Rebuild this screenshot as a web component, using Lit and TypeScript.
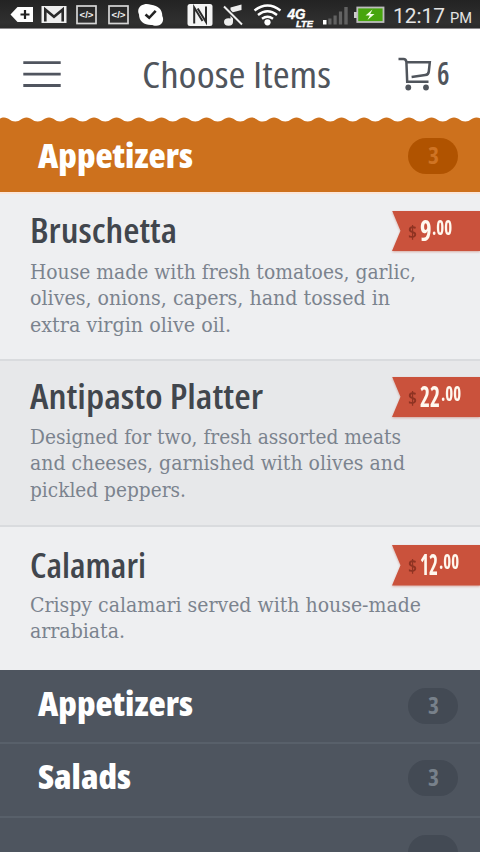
import { LitElement, html, svg, css } from 'lit';
import { customElement, property } from 'lit/decorators.js';

interface TextLine {
  text: string;
  width: number;
}

interface Dish {
  name: TextLine;
  lines: TextLine[];
  dollars: TextLine;
  kind: string;
}

const DISHES: Dish[] = [
  {
    name: { text: 'Bruschetta', width: 147 },
    lines: [
      { text: 'House made with fresh tomatoes, garlic,', width: 386 },
      { text: 'olives, onions, capers, hand tossed in', width: 360 },
      { text: 'extra virgin olive oil.', width: 201 },
    ],
    dollars: { text: '9', width: 11.5 },
    kind: 'first',
  },
  {
    name: { text: 'Antipasto Platter', width: 233 },
    lines: [
      { text: 'Designed for two, fresh assorted meats', width: 371 },
      { text: 'and cheeses, garnished with olives and', width: 375 },
      { text: 'pickled peppers.', width: 156 },
    ],
    dollars: { text: '22', width: 20 },
    kind: 'second',
  },
  {
    name: { text: 'Calamari', width: 116 },
    lines: [
      { text: 'Crispy calamari served with house-made', width: 391 },
      { text: 'arrabiata.', width: 95 },
    ],
    dollars: { text: '12', width: 18 },
    kind: 'third',
  },
];

// One line of text condensed to a given width
@customElement('fit-text')
export class FitText extends LitElement {
  static styles = css`
    :host {
      display: block;
      flex: none;
    }

    svg {
      display: block;
      overflow: visible;
    }

    text {
      fill: currentColor;
    }
  `;

  @property() text = '';
  @property({ type: Number }) width = 100;
  @property({ type: Number }) height = 30;
  @property({ type: Number }) base = 24;

  render() {
    return html`
      <svg width=${this.width} height=${this.height}>
        <text x="0" y=${this.base} textLength=${this.width} lengthAdjust="spacingAndGlyphs">${this.text}</text>
      </svg>
    `;
  }
}

@customElement('status-bar')
export class StatusBar extends LitElement {
  static styles = css`
    :host {
      display: flex;
      flex: none;
      height: 29px;
      background: linear-gradient(#232323, #303030 80%, #2b2b2b);
      border-bottom: 1px solid #8b898c;
      box-sizing: border-box;
      color: #e4e4e4;
      font-family: Roboto, sans-serif;
    }

    .icons {
      display: block;
      flex: none;
      width: 393px;
      height: 28px;
    }

    .small {
      font: bold 9px 'Liberation Sans', sans-serif;
      fill: #eee;
    }

    .net {
      font: italic bold 14px 'Liberation Sans', sans-serif;
      fill: #fff;
      stroke: #fff;
      stroke-width: 0.4px;
    }

    .lte {
      font-size: 9px;
    }

    .clock {
      font-size: 20px;
    }

    .ampm {
      font-size: 14.5px;
      margin-left: 5px;
    }
  `;

  render() {
    return html`
      <svg class="icons" viewBox="0 0 393 28" fill="none">
        <path d="M10.5 14.5 17.5 7H33v15H17.5z" fill="#fff" />
        <path d="M20.5 14.5h9M25 10v9" stroke="#222" stroke-width="2.2" />
        <path d="M41.5 6h25v17h-25z" fill="#eee" />
        <path d="M45.3 21.5V9.5l8.7 7.2 8.7-7.2v12" stroke="#2a2a2a" stroke-width="2.6" />
        ${[76, 108].map(
          (x) => svg`
            <rect x=${x + 1} y="6" width="19" height="17.5" stroke="#d6d6d6" stroke-width="1.7" />
            <text class="small" x=${x + 3.5} y="18" textLength="14" lengthAdjust="spacingAndGlyphs">&lt;/&gt;</text>
          `
        )}
        <path d="M144 4.5c3-1 5 0 7 .2 7 .6 11.5 5 11.3 11.3 2.5 5-1 10-6.3 9.8-2 0-3-.8-5-.8-7 0-12-4-12-10.5-2-4.5 0-9 5-10z" fill="#fff" />
        <path d="m145.5 14.5 3.7 3.3 6.5-7" stroke="#222" stroke-width="2.6" />
        <path d="M190 4h20q2.500 0 2.500 2.500v17q0 2.500-2.500 2.500h-20q-2.500 0-2.500-2.500v-17Q187.500 4 190 4z" fill="#f4f4f4" />
        <path d="M194.2 23.5V7.500l8.300 13.500M206 6.500v15.500l-8.300-13.500" stroke="#2a2a2a" stroke-width="2" />
        <ellipse cx="228.500" cy="22" rx="4.500" ry="3.700" fill="#eee" />
        <path d="M230.500 22V7.500l11-3v5.500l-8.500 2.300V22z" fill="#eee" />
        <path d="m224 6.500 18 18" stroke="#2a2a2a" stroke-width="4.200" />
        <path d="m224 6.500 18 18" stroke="#eee" stroke-width="1.900" />
        <circle cx="267.5" cy="22.3" r="3.1" fill="#fff" />
        <path d="M254.5 10.5q13-10 26 0M258 15q9.5-7.5 19 0M262 18.8q5.5-4 11 0" stroke="#fff" stroke-width="2.4" />
        <text class="net" x="287.5" y="18.5" textLength="18" lengthAdjust="spacingAndGlyphs">4G</text>
        <text class="net lte" x="296" y="26.5" textLength="17" lengthAdjust="spacingAndGlyphs">LTE</text>
        <path d="M323 20h3.5v4.5H323z" fill="#fff" />
        <path d="M328.3 18.5h3.2v6h-3.2zM333.5 15.5h3.2v9h-3.2zM338.9 11.5h3.2v13h-3.2zM344.3 7h3.4v17.5h-3.4z" fill="#626262" />
        <path d="M354 12h3v6h-3z" fill="#ccc" />
        <rect x="357.3" y="7.5" width="26.2" height="14.5" fill="#47a50e" stroke="#bdbdbd" stroke-width="1.8" />
        <path d="m372.5 9.5-7 6h4.300l-2.300 4.500 7-6h-4.300z" fill="#f4ffe8" />
      </svg>
      <fit-text class="clock" text="12:17" width="52" height="27" base="23"></fit-text>
      <fit-text class="ampm" text="PM" width="22" height="27" base="23"></fit-text>
    `;
  }
}

@customElement('category-bar')
export class CategoryBar extends LitElement {
  static styles = css`
    :host {
      display: flex;
      flex: none;
      justify-content: space-between;
      align-items: flex-start;
      box-sizing: border-box;
      padding: 0 22px 0 38px;
      color: #fff;
      background: #4e555f;
      --badge: #434a54;
      --count: #78818b;
    }

    .label {
      font: 800 condensed 33.5px 'Open Sans', sans-serif;
    }

    .badge {
      display: flex;
      justify-content: center;
      width: 50px;
      height: 36px;
      margin-top: var(--badge-top, 0);
      border-radius: 18px;
      background: var(--badge);
      color: var(--count);
      font: 700 condensed 23px 'Open Sans', sans-serif;
    }
  `;

  @property() label = '';
  @property({ type: Number }) size = 155;

  render() {
    return html`
      <fit-text class="label" text=${this.label} width=${this.size} height="36" base="30"></fit-text>
      <div class="badge">
        ${this.label ? html`<fit-text text="3" width="11" height="36" base="26"></fit-text>` : ''}
      </div>
    `;
  }
}

@customElement('dish-row')
export class DishRow extends LitElement {
  static styles = css`
    :host {
      display: flex;
      flex: none;
      justify-content: space-between;
      align-items: flex-start;
      box-sizing: border-box;
      padding-left: 30px;
    }

    .info {
      display: flex;
      flex-direction: column;
      width: 362px;
    }

    .name {
      color: #41464d;
      font: 600 condensed 34px 'Open Sans', sans-serif;
      margin-bottom: var(--name-gap, 9px);
    }

    .line {
      color: #7b838e;
      font: 19.5px 'DejaVu Serif', serif;
    }

    .ribbon {
      flex: none;
      display: flex;
      box-sizing: border-box;
      width: 88px;
      height: 40.5px;
      padding-left: 16px;
      background: #ca523c;
      clip-path: polygon(0 0, 100% 0, 100% 100%, 0 100%, 8.5px 50%);
      color: #fff8ee;
      font: 700 condensed 28px 'Open Sans', sans-serif;
    }

    .shadow {
      flex: none;
      margin-top: var(--ribbon-top, 0);
      filter: drop-shadow(0 1px 1px rgba(190, 90, 70, 0.45));
    }

    .sign {
      color: #8f3322;
      font-size: 18.5px;
      margin-right: 2.5px;
    }

    .cents {
      font-size: 20.5px;
      margin-left: 1.3px;
    }
  `;

  @property({ attribute: false }) dish!: Dish;

  render() {
    const { name, lines, dollars } = this.dish;
    return html`
      <div class="info">
        <fit-text class="name" text=${name.text} width=${name.width} height="36" base="30"></fit-text>
        ${lines.map(
          (l) => html`<fit-text class="line" text=${l.text} width=${l.width} height="26.3" base="21"></fit-text>`
        )}
      </div>
      <div class="shadow">
        <div class="ribbon">
          <fit-text class="sign" text="$" width="9" height="40" base="27.5"></fit-text>
          <fit-text text=${dollars.text} width=${dollars.width} height="40" base="30"></fit-text>
          <fit-text class="cents" text=".00" width="20" height="40" base="23.5"></fit-text>
        </div>
      </div>
    `;
  }
}

@customElement('app-root')
export class AppRoot extends LitElement {
  static styles = css`
    :host {
      display: flex;
      flex-direction: column;
      width: 480px;
      height: 852px;
      overflow: hidden;
      background: #4e555f;
    }

    .header {
      display: flex;
      flex: none;
      height: 88px;
      background: #fff;
      color: #50555c;
    }

    .menu {
      flex: none;
      width: 38px;
      height: 88px;
      margin-left: 23px;
    }

    .title {
      font: 400 condensed 37px 'Open Sans', sans-serif;
      margin-left: 81px;
    }

    .cart {
      flex: none;
      width: 35px;
      height: 88px;
      margin-left: 66.5px;
    }

    .count {
      font: 600 condensed 32px 'Open Sans', sans-serif;
      margin-left: 4px;
    }

    .wave {
      display: block;
      flex: none;
      width: 480px;
      height: 6px;
      background: #fff;
    }

    .active {
      height: 71px;
      padding-top: 15px;
      background: #cd711d;
      border-bottom: 2px solid #fbe6d9;
      --badge: #b05300;
      --count: #cf7424;
    }

    .first {
      height: 167px;
      padding-top: 19px;
      background: #eeeff1;
      --ribbon-top: -2.5px;
    }

    .first,
    .second {
      border-bottom: 2px solid #d9dbde;
    }

    .second {
      height: 166px;
      padding-top: 18px;
      background: #e7e8ea;
      --ribbon-top: -2.5px;
      --name-gap: 8px;
    }

    .third {
      height: 143px;
      padding-top: 21px;
      background: #eeeff1;
      --name-gap: 7px;
      --ribbon-top: -3px;
    }

    .closed {
      height: 74px;
      padding-top: 16px;
      border-bottom: 2px solid #58606a;
      --badge-top: 2px;
    }

    .salads {
      padding-top: 15px;
      --badge-top: 1px;
    }

    .last {
      border-bottom: none;
      --badge-top: 0.5px;
    }
  `;

  // Scalloped top edge, one bump every 22.5px
  wavePath() {
    let d = 'M-18.5 .5';
    for (let i = 0; i < 23; i++) {
      d += 'c5 0 6 4 11.25 4s6.25-4 11.25-4';
    }
    return d + 'V6H-18.5z';
  }

  render() {
    return html`
      <status-bar></status-bar>
      <div class="header">
        <svg class="menu" viewBox="0 0 38 88">
          <path d="M.3 33.7h37.4M.3 45.2h37.4M.3 56.5h37.4" stroke="#50555f" stroke-width="2.8" />
        </svg>
        <fit-text class="title" text="Choose Items" width="189" height="88" base="59"></fit-text>
        <svg class="cart" viewBox="0 0 35 88" fill="none" stroke="#50555c" stroke-width="2.5">
          <path d="M.5 30h5q2.5 0 2.900 3l.8 19.700H30.500" />
          <path d="M8.5 33.300h23.300l-1 9.200q-.3 3.200-3.500 3.600l-13.700 1.800" />
          <circle cx="10.3" cy="58.5" r="2.9" fill="#50555c" stroke="none" />
          <circle cx="28" cy="58.5" r="2.9" fill="#50555c" stroke="none" />
        </svg>
        <fit-text class="count" text="6" width="12.5" height="88" base="55.7"></fit-text>
      </div>
      <svg class="wave" viewBox="0 0 480 6">
        <path d=${this.wavePath()} fill="#cd711d" />
      </svg>
      <category-bar class="active" label="Appetizers"></category-bar>
      ${DISHES.map((dish) => html`<dish-row class=${dish.kind} .dish=${dish}></dish-row>`)}
      <category-bar class="closed" label="Appetizers"></category-bar>
      <category-bar class="closed salads" label="Salads" size="93"></category-bar>
      <category-bar class="closed last" label="" size="0"></category-bar>
    `;
  }
}
